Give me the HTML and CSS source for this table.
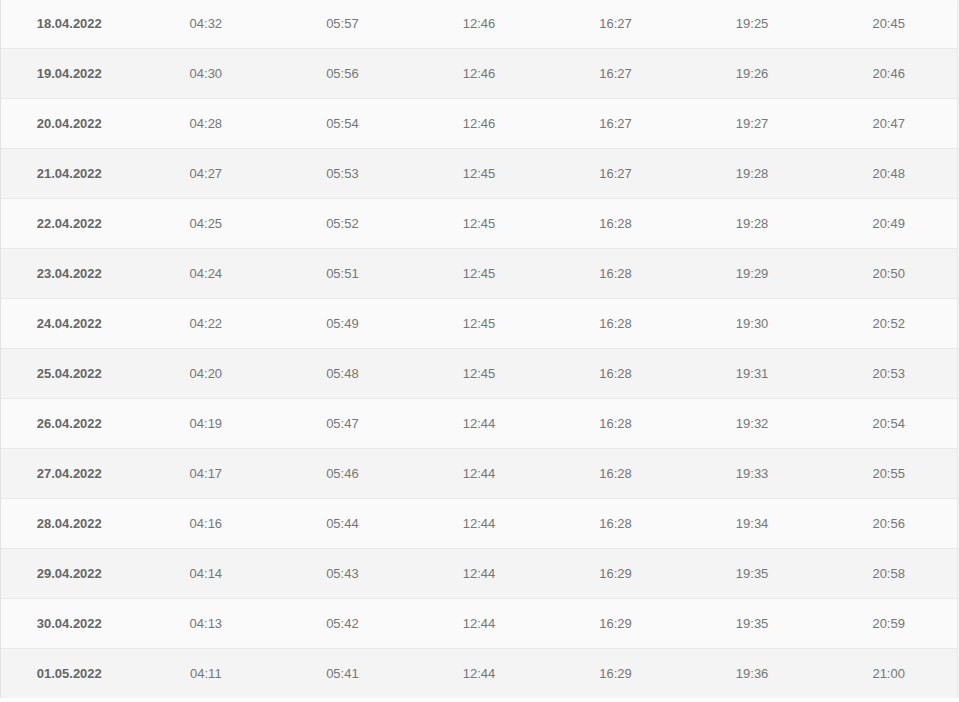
FILE: index.html
```html
<!DOCTYPE html>
<html lang="en">
<head>
    <meta charset="UTF-8">
    <meta name="viewport" content="width=device-width, initial-scale=1.0">
    <title>Prayer Times - April 2022</title>
    <link rel="stylesheet" href="styles.css">
</head>
<body>
    <div class="times-card">
        <table class="times-table">
            <tbody id="rows"></tbody>
        </table>
    </div>

    <script>
        // date, imsak, sunrise, noon, afternoon, sunset, night
        const days = [
            ['18.04.2022', '04:32', '05:57', '12:46', '16:27', '19:25', '20:45'],
            ['19.04.2022', '04:30', '05:56', '12:46', '16:27', '19:26', '20:46'],
            ['20.04.2022', '04:28', '05:54', '12:46', '16:27', '19:27', '20:47'],
            ['21.04.2022', '04:27', '05:53', '12:45', '16:27', '19:28', '20:48'],
            ['22.04.2022', '04:25', '05:52', '12:45', '16:28', '19:28', '20:49'],
            ['23.04.2022', '04:24', '05:51', '12:45', '16:28', '19:29', '20:50'],
            ['24.04.2022', '04:22', '05:49', '12:45', '16:28', '19:30', '20:52'],
            ['25.04.2022', '04:20', '05:48', '12:45', '16:28', '19:31', '20:53'],
            ['26.04.2022', '04:19', '05:47', '12:44', '16:28', '19:32', '20:54'],
            ['27.04.2022', '04:17', '05:46', '12:44', '16:28', '19:33', '20:55'],
            ['28.04.2022', '04:16', '05:44', '12:44', '16:28', '19:34', '20:56'],
            ['29.04.2022', '04:14', '05:43', '12:44', '16:29', '19:35', '20:58'],
            ['30.04.2022', '04:13', '05:42', '12:44', '16:29', '19:35', '20:59'],
            ['01.05.2022', '04:11', '05:41', '12:44', '16:29', '19:36', '21:00']
        ];

        const tbody = document.getElementById('rows');
        days.forEach(day => {
            const tr = document.createElement('tr');
            day.forEach((value, i) => {
                const td = document.createElement('td');
                td.textContent = value;
                if (i === 0) td.className = 'date';
                tr.appendChild(td);
            });
            tbody.appendChild(tr);
        });
    </script>
</body>
</html>
```

FILE: styles.css
```css
* {
    margin: 0;
    padding: 0;
    box-sizing: border-box;
    font-family: 'Liberation Sans', Arial, sans-serif;
}

body {
    background-color: #ffffff;
    color: #757575;
}

.times-card {
    width: 957px;
    margin-top: -2px;
    background: #fafafa;
    border-left: 1px solid #e2e2e2;
    box-shadow: 0 1px 3px rgba(0, 0, 0, 0.22);
}

.times-table {
    width: 100%;
    border-collapse: collapse;
    table-layout: fixed;
}

.times-table tr {
    height: 50px;
    border-top: 1px solid #e9e9e9;
}

.times-table tr:first-child {
    border-top: none;
}

.times-table tr:nth-child(odd) {
    background-color: #fafafa;
}

.times-table tr:nth-child(even) {
    background-color: #f4f4f4;
}

.times-table td {
    text-align: center;
    vertical-align: middle;
    font-size: 13px;
    padding-top: 1px;
    color: #767676;
}

.times-table td.date {
    font-weight: bold;
    color: #666666;
}
```
